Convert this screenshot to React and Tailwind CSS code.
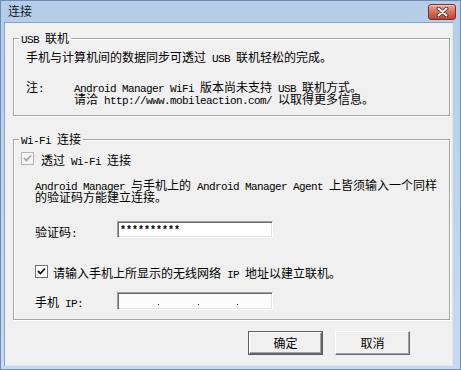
import React from 'react';

// split text into ASCII (half-width mono) and CJK runs, like the old SimSun dialog font
const T = ({ s }) =>
  s.split(/([\x20-\x7e]+)/).map((part, i) =>
    /[\x20-\x7e]/.test(part) ? (
      <span
        key={i}
        className="font-['Liberation_Mono',monospace] text-[11px] tracking-[-0.6px] leading-[12px] whitespace-pre"
      >
        {part}
      </span>
    ) : (
      <span key={i} className="leading-[12px]">{part}</span>
    )
  );

// one fixed-height text line
const L = ({ s, className = '' }) => (
  <div className={`h-[12px] leading-[12px] whitespace-nowrap ${className}`}>
    <T s={s} />
  </div>
);

const Check = ({ disabled }) => (
  <div
    className={`w-[13px] h-[13px] flex items-center justify-center shrink-0 border ${
      disabled ? 'border-[#b4b4b4] bg-[#f4f4f4]' : 'border-[#6f6f6f] bg-white'
    }`}
  >
    <svg width="9" height="9" viewBox="0 0 9 9">
      <path
        d="M1 4 L3.5 6.5 L8 1.5"
        fill="none"
        stroke={disabled ? '#a8a8a8' : '#111'}
        strokeWidth="1.8"
      />
    </svg>
  </div>
);

const sunken =
  'border border-t-[#a0a0a0] border-l-[#a0a0a0] border-r-white border-b-white shadow-[inset_1px_1px_0_#696969,inset_-1px_-1px_0_#e3e3e3]';

const raised =
  'border border-t-white border-l-white border-r-[#696969] border-b-[#696969] shadow-[inset_-1px_-1px_0_#a0a0a0] bg-[#f0f0f0]';

const Group = ({ label, children, className = '' }) => (
  <fieldset className={`border border-[#a5a5a5] shadow-[inset_1px_1px_0_#fff,1px_1px_0_#fff] ${className}`}>
    <legend className="ml-[5px] px-[2px] h-[12px] leading-[12px] whitespace-nowrap">
      <T s={label} />
    </legend>
    {children}
  </fieldset>
);

export default function App() {
  return (
    <div className="w-[461px] h-[370px] flex flex-col bg-gradient-to-b from-[#b6cde8] to-[#c6d9ef] border border-[#6d8db5] font-['Noto_Sans_CJK_SC',sans-serif] text-[12px] leading-[12px] text-black">
      {/* Title bar */}
      <div className="h-[21px] flex items-start justify-between pl-[7px] pr-[4px]">
        <div className="pt-[4px] text-[12px] text-[#101c2c]">连接</div>
        <div className="mt-[3px] w-[28px] h-[16px] rounded-[3px] border border-[#7a2d22] bg-gradient-to-b from-[#e6a796] via-[#d0705a] to-[#c1432e] flex items-center justify-center shadow-[inset_0_1px_0_#f3c8bc]">
          <svg width="13" height="10" viewBox="0 0 13 10">
            <path d="M2.5 1.5 L10.5 8.5 M10.5 1.5 L2.5 8.5" stroke="#5a2018" strokeWidth="3.6" strokeLinecap="round" />
            <path d="M2.5 1.5 L10.5 8.5 M10.5 1.5 L2.5 8.5" stroke="#fff" strokeWidth="2" strokeLinecap="round" />
          </svg>
        </div>
      </div>

      {/* Client area */}
      <div className="flex-1 ml-[3px] mr-[7px] mb-[3px] bg-[#f0f0f0] shadow-[inset_1px_1px_0_#8aa4c4,inset_-1px_-1px_0_#dfe8f3] pl-[9px] pr-[3px] pt-[10px] flex flex-col">
        <Group label="USB 联机">
          <div className="pt-[7px] pl-[12px] pb-[10px]">
            <L s="手机与计算机间的数据同步可透过 USB 联机轻松的完成。" />
            <div className="mt-[18px] flex">
              <L s="注:" className="w-[48px]" />
              <div>
                <L s="Android Manager WiFi 版本尚未支持 USB 联机方式。" />
                <L s="请洽 http://www.mobileaction.com/ 以取得更多信息。" />
              </div>
            </div>
          </div>
        </Group>

        <Group label="Wi-Fi 连接" className="mt-[17px]">
          <div className="pt-[7px] pb-[9px]">
            <div className="pl-[7px] flex items-center h-[13px]">
              <Check disabled />
              <L s="透过 Wi-Fi 连接" className="ml-[7px] pt-[1px]" />
            </div>

            <div className="mt-[14px] pl-[21px]">
              <L s="Android Manager 与手机上的 Android Manager Agent 上皆须输入一个同样" />
              <L s="的验证码方能建立连接。" />
            </div>

            <div className="mt-[18px] pl-[21px] flex items-center h-[17px]">
              <L s="验证码:" className="w-[82px] pt-[2px]" />
              <div className={`w-[156px] h-[17px] bg-white flex items-center pl-[2px] ${sunken}`}>
                <span className="font-['Liberation_Mono',monospace] text-[10px] font-bold leading-[10px] pt-[3px]">**********</span>
              </div>
            </div>

            <div className="mt-[27px] pl-[21px] flex items-center h-[13px]">
              <Check />
              <L s="请输入手机上所显示的无线网络 IP 地址以建立联机。" className="ml-[5px] pt-[1px]" />
            </div>

            <div className="mt-[14px] pl-[21px] flex items-center h-[18px]">
              <L s="手机 IP:" className="w-[82px] pt-[1px]" />
              <div className={`w-[156px] h-[18px] bg-[#fcfcfc] flex items-end pb-[4px] ${sunken}`}>
                <div className="w-[40px]" />
                <div className="w-[1px] h-[1px] bg-[#222]" />
                <div className="w-[39px]" />
                <div className="w-[1px] h-[1px] bg-[#222]" />
                <div className="w-[38px]" />
                <div className="w-[1px] h-[1px] bg-[#222]" />
              </div>
            </div>
          </div>
        </Group>

        <div className="mt-[11px] mr-[40px] flex justify-end gap-[12px]">
          <div className="border border-[#5c5c5c]">
            <div className={`w-[73px] h-[22px] flex items-center justify-center ${raised}`}>确定</div>
          </div>
          <div className={`w-[75px] h-[24px] flex items-center justify-center ${raised}`}>取消</div>
        </div>
      </div>
    </div>
  );
}
